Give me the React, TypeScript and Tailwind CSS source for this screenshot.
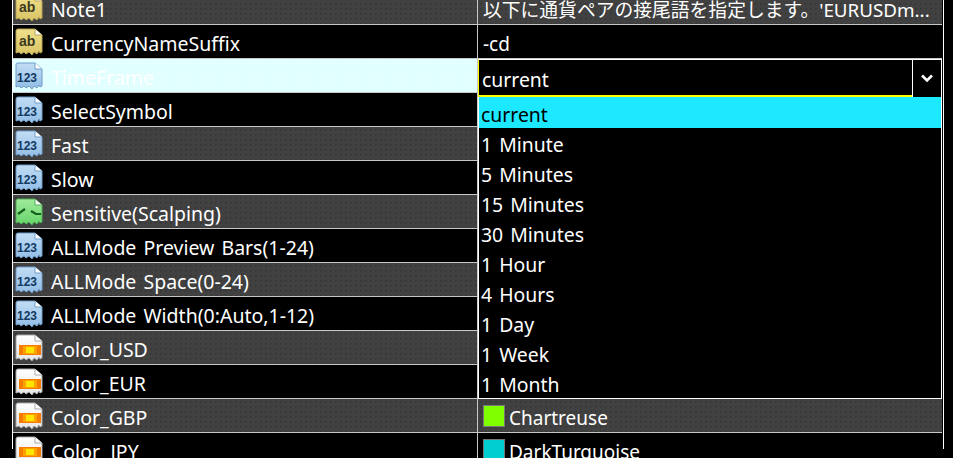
type IconKind = "ab" | "num" | "line" | "color";

interface Param {
  name: string;
  icon: IconKind;
  value?: string;
  swatch?: string;
  tone: "gray" | "black" | "active";
}

const params: Param[] = [
  { name: "Note1", icon: "ab", value: "以下に通貨ペアの接尾語を指定します。'EURUSDm...", tone: "gray" },
  { name: "CurrencyNameSuffix", icon: "ab", value: "-cd", tone: "black" },
  { name: "TimeFrame", icon: "num", tone: "active" },
  { name: "SelectSymbol", icon: "num", tone: "black" },
  { name: "Fast", icon: "num", tone: "gray" },
  { name: "Slow", icon: "num", tone: "black" },
  { name: "Sensitive(Scalping)", icon: "line", tone: "gray" },
  { name: "ALLMode Preview Bars(1-24)", icon: "num", tone: "black" },
  { name: "ALLMode Space(0-24)", icon: "num", tone: "gray" },
  { name: "ALLMode Width(0:Auto,1-12)", icon: "num", tone: "black" },
  { name: "Color_USD", icon: "color", tone: "gray" },
  { name: "Color_EUR", icon: "color", tone: "black" },
  { name: "Color_GBP", icon: "color", value: "Chartreuse", swatch: "bg-[#7fff00]", tone: "gray" },
  { name: "Color_JPY", icon: "color", value: "DarkTurquoise", swatch: "bg-[#00ced1]", tone: "black" },
];

const options = ["1 Minute", "5 Minutes", "15 Minutes", "30 Minutes", "1 Hour", "4 Hours", "1 Day", "1 Week", "1 Month"];

const iconFill: Record<IconKind, [string, string, string]> = {
  ab: ["#f0e08c", "#d9c465", "#b7a352"],
  num: ["#c2ddf5", "#92bde6", "#6f9cc9"],
  line: ["#a0eb9c", "#64d468", "#4fae55"],
  color: ["#ffffff", "#e6e6e6", "#a9a9a9"],
};

const ParamIcon = ({ kind }: { kind: IconKind }) => {
  const [top, bottom, edge] = iconFill[kind];
  return (
    <svg width="30" height="28" viewBox="0 0 30 28" className="shrink-0">
      <defs>
        <linearGradient id={`body-${kind}`} x1="0" y1="0" x2="0" y2="1">
          <stop offset="0" stopColor={top} />
          <stop offset="1" stopColor={bottom} />
        </linearGradient>
      </defs>
      <path
        d="M2 3 Q2 1 4 1 H21 L28 7 V24 L26 25 L25 23 L23 26 L20 24 L18 27 L15 24 L12 26 L10 24 L7 26 L5 24 L2 25 Z"
        fill={`url(#body-${kind})`}
        stroke={edge}
        strokeWidth="1"
      />
      <path d="M21 1 V7 H28" fill="#fff" stroke={edge} strokeWidth="1" />
      {kind === "ab" && (
        <text x="5" y="18" fontSize="14" fontWeight="700" fill="#3d3a20" fontFamily="'Liberation Sans', sans-serif">
          ab
        </text>
      )}
      {kind === "num" && (
        <text
          x="3"
          y="20"
          fontSize="12.5"
          fontWeight="700"
          fill="#12395f"
          fontFamily="'Liberation Sans', sans-serif"
          textLength="20"
          lengthAdjust="spacingAndGlyphs"
        >
          123
        </text>
      )}
      {kind === "line" && (
        <path d="M4 16 L11 11 M17 13 L22 16 H27" fill="none" stroke="#14601e" strokeWidth="2.2" />
      )}
      {kind === "color" && (
        <>
          <rect x="5" y="11" width="22" height="10" fill="#f57c00" />
          <rect x="9" y="12" width="14" height="8" fill="#ffa200" />
          <rect x="12" y="13" width="8" height="6" fill="#ffe600" />
        </>
      )}
    </svg>
  );
};

const toneClass = {
  gray: "bg-[#414141] bg-[radial-gradient(#373737_1px,transparent_1px)] bg-[length:5px_5px]",
  black: "bg-black",
  active: "bg-[#e0ffff] bg-[radial-gradient(#f0ffff_1px,transparent_1px)] bg-[length:3px_3px]",
};

const Row = ({ param }: { param: Param }) => (
  <div className={`flex h-[34px] shrink-0 border-b border-[#c8c8c8] ${toneClass[param.tone]}`}>
    <div className="flex w-[465px] shrink-0 items-center border-r border-[#c8c8c8] pl-[1px]">
      <ParamIcon kind={param.icon} />
      <span className="ml-[7px] whitespace-nowrap pt-[5px] text-[19.5px] text-white [word-spacing:2px]">{param.name}</span>
    </div>
    <div className="flex min-w-0 flex-1 items-center whitespace-nowrap pl-[5px] text-white">
      {param.swatch && <span className={`mr-[4px] h-[22px] w-[22px] shrink-0 border border-[#777] ${param.swatch}`} />}
      <span className={`pt-[5px] ${param.name === "Note1" ? "text-[18.8px]" : "text-[19px]"}`}>{param.value}</span>
    </div>
  </div>
);

export default function App() {
  return (
    <div className="relative h-[458px] w-[953px] overflow-hidden bg-black font-['Noto_Sans','Noto_Sans_CJK_JP',sans-serif] text-[19.4px] leading-none">
      <div className="ml-[12px] h-full w-[932px] border-x border-white pr-[1px]">
        <div className="-mt-[9px] flex flex-col">
          {params.map((param) => (
            <Row key={param.name} param={param} />
          ))}
        </div>
      </div>

      {/* opened combo box */}
      <div className="absolute left-[478px] top-[59px] w-[464px] text-white">
        <div className="flex h-[38px] border-x border-t border-white border-l-[#ffff00] bg-black">
          <div className="flex flex-1 items-center border-b-2 border-[#ffff00] pl-[3px] pt-[5px]">current</div>
          <div className="flex w-[29px] items-center justify-center border-l border-white">
            <svg width="12" height="9" viewBox="0 0 12 9">
              <path d="M1 1.5 L6 6.5 L11 1.5" fill="none" stroke="#fff" strokeWidth="2.6" />
            </svg>
          </div>
        </div>
        <div className="border-x border-b border-white bg-black [word-spacing:2px]">
          <div className="flex h-[31px] items-center bg-[#1ce8ff] pl-[2px] pt-[5px] text-black">current</div>
          {options.map((option) => (
            <div key={option} className="flex h-[30px] items-center pl-[2px] pt-[4px]">
              {option}
            </div>
          ))}
        </div>
      </div>
    </div>
  );
}
